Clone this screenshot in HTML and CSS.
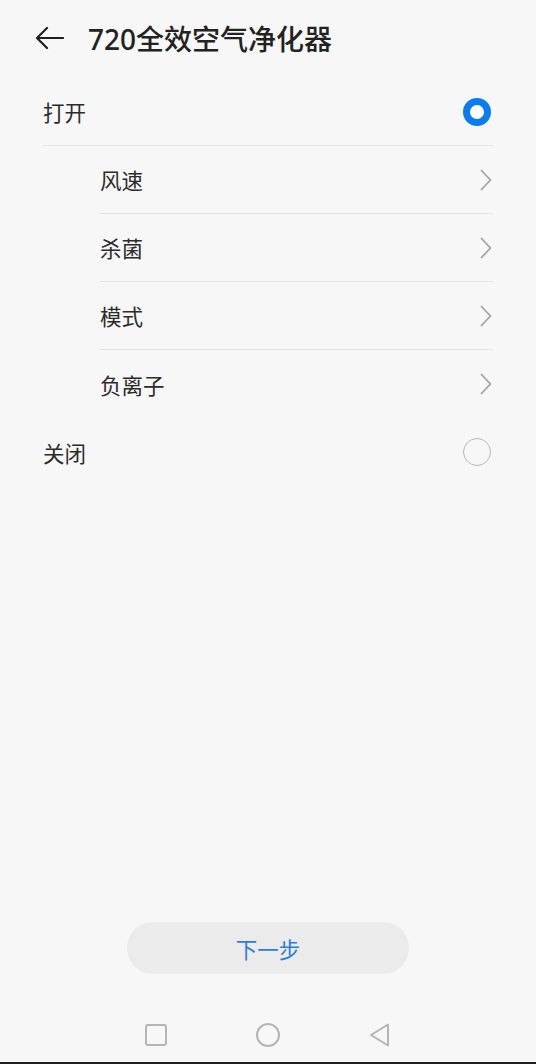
FILE: index.html
```html
<!DOCTYPE html>
<html lang="zh-CN">
<head>
<meta charset="utf-8">
<link rel="stylesheet" href="styles.css">
<title>720全效空气净化器</title>
</head>
<body>
<div class="page">
  <header class="header">
    <svg class="back" width="30" height="24" viewBox="0 0 30 24"><path d="M13 2 L3 12 L13 22 M3 12 H29" fill="none" stroke="#1f1f1f" stroke-width="2.2" stroke-linecap="round" stroke-linejoin="round"/></svg>
    <h1 class="title">720全效空气净化器</h1>
  </header>

  <main class="list">
    <div class="row row-main row-open">
      <span class="label">打开</span>
      <span class="radio radio-on"></span>
    </div>
    <div class="sub">
      <div class="row row-sub"><span class="label">风速</span><svg class="chev" width="12" height="22" viewBox="0 0 12 22"><path d="M1.5 1.5 L10.5 11 L1.5 20.5" fill="none" stroke="#a3a3a3" stroke-width="1.8" stroke-linecap="round" stroke-linejoin="round"/></svg></div>
      <div class="row row-sub"><span class="label">杀菌</span><svg class="chev" width="12" height="22" viewBox="0 0 12 22"><path d="M1.5 1.5 L10.5 11 L1.5 20.5" fill="none" stroke="#a3a3a3" stroke-width="1.8" stroke-linecap="round" stroke-linejoin="round"/></svg></div>
      <div class="row row-sub"><span class="label">模式</span><svg class="chev" width="12" height="22" viewBox="0 0 12 22"><path d="M1.5 1.5 L10.5 11 L1.5 20.5" fill="none" stroke="#a3a3a3" stroke-width="1.8" stroke-linecap="round" stroke-linejoin="round"/></svg></div>
      <div class="row row-sub row-last"><span class="label">负离子</span><svg class="chev" width="12" height="22" viewBox="0 0 12 22"><path d="M1.5 1.5 L10.5 11 L1.5 20.5" fill="none" stroke="#a3a3a3" stroke-width="1.8" stroke-linecap="round" stroke-linejoin="round"/></svg></div>
    </div>
    <div class="row row-main">
      <span class="label">关闭</span>
      <span class="radio radio-off"></span>
    </div>
  </main>

  <div class="spacer"></div>

  <button class="next">下一步</button>

  <nav class="navbar">
    <span class="nav-item"><svg width="24" height="24" viewBox="0 0 24 24"><rect x="2" y="2" width="20" height="20" rx="2" fill="none" stroke="#b5b5b5" stroke-width="2"/></svg></span>
    <span class="nav-item"><svg width="26" height="26" viewBox="0 0 26 26"><circle cx="13" cy="13" r="11" fill="none" stroke="#b5b5b5" stroke-width="2"/></svg></span>
    <span class="nav-item"><svg width="24" height="26" viewBox="0 0 24 26"><path d="M20 2.5 L20 23.5 L3 13 Z" fill="none" stroke="#b5b5b5" stroke-width="2" stroke-linejoin="round"/></svg></span>
  </nav>
</div>
</body>
</html>
```

FILE: styles.css
```css
html, body {
  margin: 0;
  padding: 0;
  background: #f7f7f7;
}

body {
  font-family: "Noto Sans", "Noto Sans CJK SC", sans-serif;
  color: #333;
}

.page {
  height: 1064px;
  display: flex;
  flex-direction: column;
  box-sizing: border-box;
  border-bottom: 2px solid #1e1e1e;
}

.header {
  height: 78px;
  display: flex;
  align-items: center;
  padding-left: 34px;
  padding-bottom: 2px;
  box-sizing: border-box;
}

.back {
  display: block;
}

.title {
  margin: 0 0 0 24px;
  font-size: 28px;
  font-weight: 500;
  color: #222;
  letter-spacing: 0;
}

.list {
  padding: 0 43px;
}

.row {
  display: flex;
  align-items: center;
  justify-content: space-between;
  height: 68px;
  box-sizing: border-box;
}

.row-open {
  height: 68px;
  border-bottom: 1px solid #e2e2e2;
}

.label {
  font-size: 21.5px;
  color: #2b2b2b;
}

.sub {
  margin-left: 57px;
}

.row-sub {
  border-bottom: 1px solid #e2e2e2;
}

.row-sub.row-last {
  border-bottom: none;
}

.chev {
  display: block;
  margin-right: 1px;
}

.radio {
  width: 28px;
  height: 28px;
  border-radius: 50%;
  box-sizing: border-box;
  margin-right: 2px;
}

.radio-on {
  border: 7px solid #0a7cf0;
  background: #fff;
}

.radio-off {
  border: 1.6px solid #b9b9b9;
}

.spacer {
  flex: 1;
}

.next {
  align-self: center;
  width: 282px;
  height: 52px;
  border: none;
  border-radius: 26px;
  background: #ebebeb;
  color: #2a7fdc;
  font-family: "Noto Sans", "Noto Sans CJK SC", sans-serif;
  font-size: 21.5px;
  padding: 0;
  margin-bottom: 34px;
}

.navbar {
  height: 54px;
  display: grid;
  grid-template-columns: repeat(3, 112px);
  justify-content: center;
  align-items: center;
}

.nav-item {
  display: flex;
  justify-content: center;
  align-items: center;
}

.nav-item svg {
  display: block;
}
```
